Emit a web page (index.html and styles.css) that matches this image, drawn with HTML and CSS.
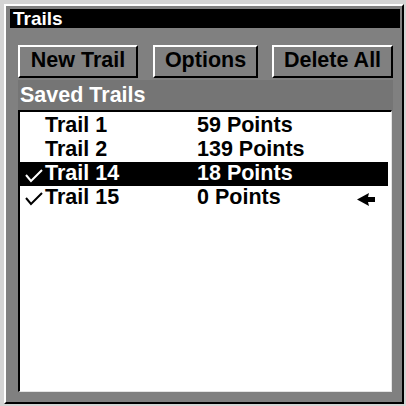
FILE: index.html
```html
<!DOCTYPE html>
<html>
<head>
<meta charset="utf-8">
<link rel="stylesheet" href="styles.css">
</head>
<body>
<div class="window">
  <div class="titlebar">Trails</div>
  <div class="buttons">
    <div class="btn btn-new">New Trail</div>
    <div class="btn btn-options">Options</div>
    <div class="btn btn-delete">Delete All</div>
  </div>
  <div class="section">Saved Trails</div>
  <div class="list">
    <div class="row">
      <span class="check"></span>
      <span class="name">Trail 1</span>
      <span class="points">59 Points</span>
    </div>
    <div class="row">
      <span class="check"></span>
      <span class="name">Trail 2</span>
      <span class="points">139 Points</span>
    </div>
    <div class="row selected">
      <span class="check"><svg viewBox="0 0 25 24" width="25" height="24"><polyline points="6,13 11,19 22,8"/></svg></span>
      <span class="name">Trail 14</span>
      <span class="points">18 Points</span>
    </div>
    <div class="row">
      <span class="check"><svg viewBox="0 0 25 24" width="25" height="24"><polyline points="6,12 11,18 22,7"/></svg></span>
      <span class="name">Trail 15</span>
      <span class="points">0 Points</span>
      <span class="marker"><svg viewBox="0 0 20 24" width="20" height="24"><polygon points="1,13.5 13,7 12,11 19,11 19,16 12,16 13,20"/></svg></span>
    </div>
  </div>
</div>
</body>
</html>
```
FILE: styles.css
```css
html, body {
  margin: 0;
  padding: 0;
}
body {
  box-sizing: border-box;
  width: 406px;
  height: 406px;
  padding: 4px;
  background: #d4d4d4;
  font-family: "Liberation Sans", Arial, sans-serif;
  font-weight: bold;
  overflow: hidden;
}
.window {
  box-sizing: border-box;
  width: 400px;
  height: 400px;
  border: 2px solid;
  border-color: #fff #000 #000 #fff;
  background: #808080;
  padding: 3px 2px 0 4px;
}
.titlebar {
  height: 19px;
  line-height: 19px;
  background: #000;
  color: #fff;
  font-size: 19px;
  padding-left: 3px;
}
.buttons {
  display: flex;
  margin-top: 17px;
  padding-left: 8px;
  height: 33px;
}
.btn {
  box-sizing: border-box;
  height: 33px;
  border: 2px solid;
  border-color: #fff #000 #000 #fff;
  font-size: 21.5px;
  line-height: 27px;
  text-align: center;
  color: #000;
}
.btn-new { width: 120px; }
.btn-options { width: 105px; margin-left: 15px; }
.btn-delete { width: 121px; margin-left: 14px; }
.section {
  box-sizing: border-box;
  margin: 2px 0 0 8px;
  width: 375px;
  height: 30px;
  padding: 3px 0 0 2px;
  line-height: 24px;
  font-size: 21.5px;
  color: #fff;
  background: #757575;
}
.list {
  box-sizing: border-box;
  margin-left: 8px;
  width: 374px;
  height: 282px;
  border-style: solid;
  border-width: 2px 1px 1px 2px;
  border-color: #000 #e4e4e4 #e4e4e4 #000;
  background: #fff;
  padding-top: 2px;
}
.row {
  display: flex;
  align-items: flex-start;
  height: 24px;
  margin-right: 3px;
  font-size: 21.5px;
  line-height: 22px;
  color: #000;
}
.row.selected {
  background: #000;
  color: #fff;
}
.check {
  flex: none;
  width: 25px;
  height: 24px;
}
.check svg {
  display: block;
  fill: none;
  stroke: currentColor;
  stroke-width: 2;
}
.name {
  flex: none;
  width: 152px;
}
.points {
  flex: 1;
}
.marker {
  flex: none;
  width: 20px;
  height: 24px;
  margin-right: 12px;
}
.marker svg {
  display: block;
  fill: #000;
}
```
